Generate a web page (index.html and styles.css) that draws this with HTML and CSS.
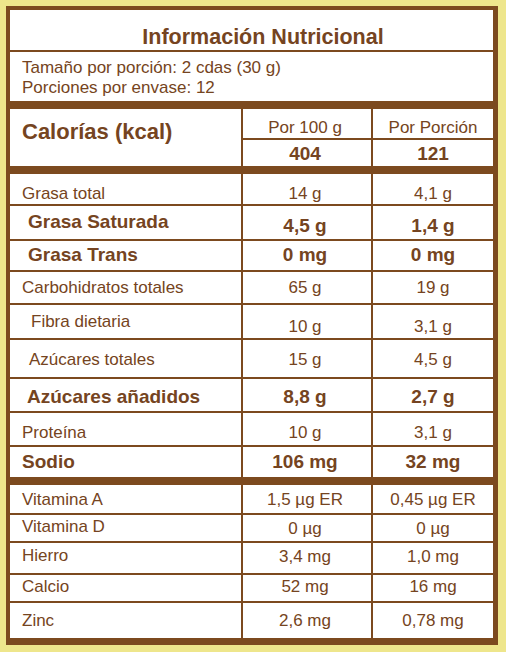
FILE: index.html
```html
<!DOCTYPE html>
<html lang="es">
<head>
<meta charset="utf-8">
<title>Información Nutricional</title>
<link rel="stylesheet" href="styles.css">
</head>
<body>
<div class="label">
  <div class="title">Información Nutricional</div>
  <div class="serving">
    <div>Tamaño por porción: 2 cdas (30 g)</div>
    <div>Porciones por envase: 12</div>
  </div>
  <div class="cal">
    <div class="cal-label">Calorías (kcal)</div>
    <div class="cal-h">Por 100 g</div>
    <div class="cal-h">Por Porción</div>
    <div class="cal-v">404</div>
    <div class="cal-v">121</div>
  </div>
  <div class="section">
    <div class="row r-grasa"><div class="n">Grasa total</div><div class="v">14 g</div><div class="v">4,1 g</div></div>
    <div class="row b r-sat"><div class="n in1">Grasa Saturada</div><div class="v">4,5 g</div><div class="v">1,4 g</div></div>
    <div class="row b r-trans"><div class="n in1">Grasa Trans</div><div class="v">0 mg</div><div class="v">0 mg</div></div>
    <div class="row r-carb"><div class="n">Carbohidratos totales</div><div class="v">65 g</div><div class="v">19 g</div></div>
    <div class="row r-fib"><div class="n in2">Fibra dietaria</div><div class="v">10 g</div><div class="v">3,1 g</div></div>
    <div class="row r-azt"><div class="n in3">Azúcares totales</div><div class="v">15 g</div><div class="v">4,5 g</div></div>
    <div class="row b r-aza"><div class="n in4">Azúcares añadidos</div><div class="v">8,8 g</div><div class="v">2,7 g</div></div>
    <div class="row r-prot"><div class="n">Proteína</div><div class="v">10 g</div><div class="v">3,1 g</div></div>
    <div class="row b r-sod"><div class="n">Sodio</div><div class="v">106 mg</div><div class="v">32 mg</div></div>
  </div>
  <div class="section">
    <div class="row r-va"><div class="n">Vitamina A</div><div class="v">1,5 µg ER</div><div class="v">0,45 µg ER</div></div>
    <div class="row r-vd"><div class="n">Vitamina D</div><div class="v">0 µg</div><div class="v">0 µg</div></div>
    <div class="row r-fe"><div class="n">Hierro</div><div class="v">3,4 mg</div><div class="v">1,0 mg</div></div>
    <div class="row r-ca"><div class="n">Calcio</div><div class="v">52 mg</div><div class="v">16 mg</div></div>
    <div class="row r-zn"><div class="n">Zinc</div><div class="v">2,6 mg</div><div class="v">0,78 mg</div></div>
  </div>
</div>
</body>
</html>
```

FILE: styles.css
```css
* { box-sizing: border-box; }

html, body {
  margin: 0;
  padding: 0;
  background: #eee68c;
}

body {
  font-family: "Liberation Sans", Arial, sans-serif;
  color: #754421;
  padding: 6px 8px 0 6px;
}

.label {
  width: 492px;
  background: #ffffff;
  border-style: solid;
  border-color: #7c4a1f;
  border-width: 4px 5px 7px 4px;
}

.title {
  height: 42px;
  border-bottom: 2px solid #7c4a1f;
  font-size: 21.5px;
  font-weight: bold;
  line-height: 26px;
  padding-top: 14px;
  padding-left: 23px;
  text-align: center;
}

.serving {
  height: 49px;
  font-size: 17px;
  line-height: 20px;
  padding: 6px 0 0 12px;
}

.cal {
  display: grid;
  grid-template-columns: 231px 130px 1fr;
  grid-template-rows: 31px 26px;
  border-top: 8px solid #7c4a1f;
  height: 65px;
}

.cal-label {
  grid-row: 1 / span 2;
  font-size: 22px;
  font-weight: bold;
  line-height: 26px;
  padding: 10px 0 0 12px;
}

.cal-h {
  border-left: 2px solid #7c4a1f;
  border-bottom: 2px solid #7c4a1f;
  font-size: 17px;
  line-height: 20px;
  padding-top: 9px;
  text-align: center;
}

.cal-v {
  border-left: 2px solid #7c4a1f;
  font-size: 19px;
  font-weight: bold;
  line-height: 22px;
  padding-top: 3px;
  text-align: center;
}

.cal-h:nth-child(2), .cal-v:nth-child(4) { padding-right: 4px; }

.section {
  border-top: 8px solid #7c4a1f;
}

.row {
  display: grid;
  grid-template-columns: 231px 130px 1fr;
  border-bottom: 2px solid #7c4a1f;
  font-size: 17px;
  line-height: 20px;
}

.row:last-child { border-bottom: none; }

.row.b {
  font-size: 19px;
  font-weight: bold;
  line-height: 22px;
}

.n {
  padding-left: 12px;
  padding-top: var(--pt);
  white-space: nowrap;
}

.n.in1 { padding-left: 18px; }
.n.in2 { padding-left: 21px; }
.n.in3 { padding-left: 19px; }
.n.in4 { padding-left: 17px; }

.v {
  border-left: 2px solid #7c4a1f;
  text-align: center;
  padding-top: var(--vpt, var(--pt));
  white-space: nowrap;
}

.row .v:nth-child(2) { padding-right: 4px; }

.r-grasa { height: 32px; --pt: 10px; }
.r-sat   { height: 35px; --pt: 5px; --vpt: 9px; }
.r-trans { height: 31px; --pt: 3px; }
.r-carb  { height: 33px; --pt: 6px; }
.r-fib   { height: 35px; --pt: 7px; --vpt: 12px; }
.r-azt   { height: 39px; --pt: 10px; }
.r-aza   { height: 34px; --pt: 7px; }
.r-prot  { height: 34px; --pt: 10px; }
.r-sod   { height: 30px; --pt: 4px; }

.r-va    { height: 30px; --pt: 5px; }
.r-vd    { height: 28px; --pt: 2px; --vpt: 4px; }
.r-fe    { height: 32px; --pt: 3px; --vpt: 4px; }
.r-ca    { height: 28px; --pt: 2px; }
.r-zn    { height: 35px; --pt: 8px; }
```
